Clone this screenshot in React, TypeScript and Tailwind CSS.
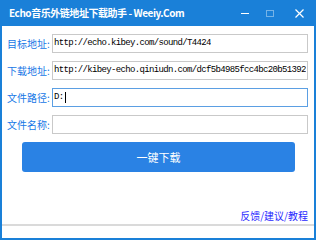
import React from 'react';

const rows = [
  { label: '目标地址:', value: 'http://echo.kibey.com/sound/T4424', focus: false },
  { label: '下载地址:', value: 'http://kibey-echo.qiniudn.com/dcf5b4985fcc4bc20b51392', focus: false },
  { label: '文件路径:', value: 'D:', focus: true },
  { label: '文件名称:', value: '', focus: false },
];

export default function App() {
  return (
    <div
      className="w-[316px] h-[240px] flex flex-col bg-white border-x-2 border-b-2 border-[#1a80d8] overflow-hidden"
      style={{ fontFamily: '"Noto Sans CJK SC", "Liberation Sans", sans-serif' }}
    >
      {/* title bar */}
      <div className="h-[26px] -mx-[2px] bg-[#1a80d8] flex items-center pl-[9px] pr-[12px] text-white shrink-0">
        <span className="text-[10px] font-bold leading-none tracking-[-0.45px]">Echo音乐外链地址下载助手 - Weeiy.Com</span>
        <div className="ml-auto flex items-center">
          <div className="w-[8px] h-[1px] bg-white" />
          <div className="w-[8px] h-[7px] border border-white/40 ml-[17px]" />
          <svg width="9" height="9" viewBox="0 0 9 9" className="ml-[21px]">
            <path d="M0.5 0.5L8.5 8.5M8.5 0.5L0.5 8.5" stroke="white" strokeWidth="1.2" />
          </svg>
        </div>
      </div>

      {/* form */}
      <div className="flex flex-col gap-[8px] pt-[8px] pl-[5px] pr-[6px]">
        {rows.map((r) => (
          <div key={r.label} className="flex items-center h-[19px]">
            <span className="w-[45px] text-[10px] text-[#1677e6] leading-none whitespace-nowrap">{r.label}</span>
            <div
              className={`flex-1 h-[19px] flex items-center pl-[1px] border ${r.focus ? 'border-[#5b9fe3]' : 'border-[#c9c9c9]'}`}
            >
              <span
                className="text-[9px] text-black whitespace-nowrap overflow-hidden tracking-[-0.65px]"
                style={{ fontFamily: '"Liberation Mono", monospace' }}
              >
                {r.value}
              </span>
              {r.focus && <span className="w-[1px] h-[11px] bg-black ml-[1px]" />}
            </div>
          </div>
        ))}
      </div>

      {/* download button */}
      <div className="pt-[8px] pl-[20px] pr-[19px]">
        <button className="w-full h-[30px] rounded-[3px] bg-[#2a82e4] text-white text-[11px] flex items-center justify-center">
          一键下载
        </button>
      </div>

      {/* link */}
      <div className="mt-auto flex justify-end pr-[6px] pb-[3px]">
        <span className="text-[10px] text-[#2a2aff] leading-none">反馈/建议/教程</span>
      </div>
      <div className="h-[14px] border-t-2 border-[#dadada] shrink-0" />
    </div>
  );
}
